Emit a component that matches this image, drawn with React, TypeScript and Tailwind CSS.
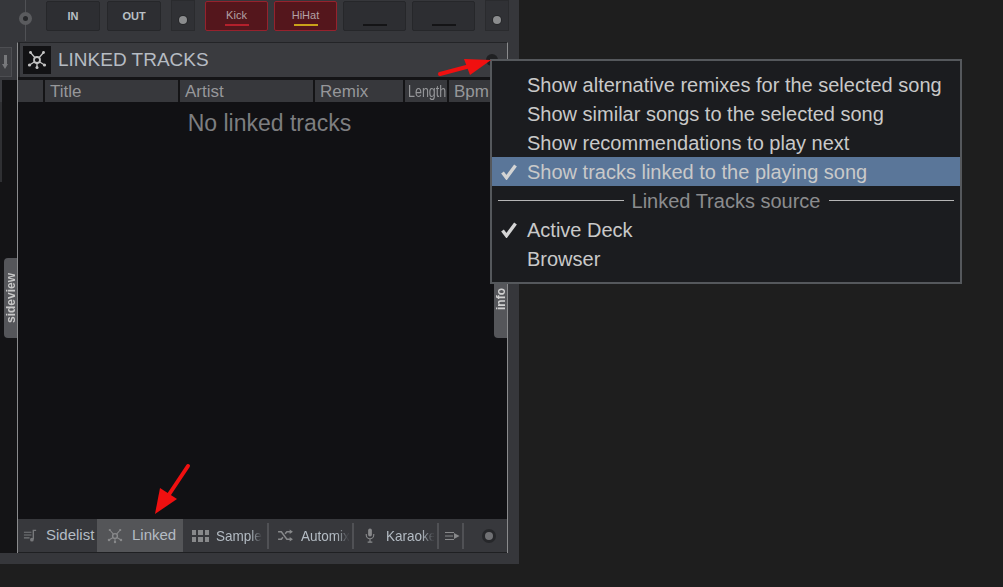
import React from 'react';

const LinkedIcon: React.FC<{ className?: string }> = ({ className }) => (
    <svg viewBox="0 0 20 20" className={className} fill="none" stroke="currentColor">
        <circle cx="10" cy="10" r="3" strokeWidth="1.8" />
        <path d="M3.5 2.5l4.5 5.2M16.5 2.5L12 7.7M7.6 11.8L2.5 15M12.4 11.8l5.1 3.2M10 13v4.5" strokeWidth="1.3" />
        <circle cx="3.5" cy="2.5" r="1.4" fill="currentColor" stroke="none" />
        <circle cx="16.5" cy="2.5" r="1.4" fill="currentColor" stroke="none" />
        <circle cx="2.5" cy="15" r="1.6" fill="currentColor" stroke="none" />
        <circle cx="17.5" cy="15" r="1.6" fill="currentColor" stroke="none" />
        <circle cx="10" cy="17.5" r="1.5" fill="currentColor" stroke="none" />
    </svg>
);

const CheckMark = () => (
    <svg viewBox="0 0 16 16" className="w-[16px] h-[16px] text-[#d4d4d4]" fill="none" stroke="currentColor">
        <path d="M1.5 8.5l4 5.2L14.5 1.5" strokeWidth="3.4" />
    </svg>
);

const KnobButton = () => (
    <div className="w-[24px] h-[31px] -mt-[1px] bg-[#303135] border border-[#2a2b2e] flex items-center justify-center pt-[8px]">
        <div className="w-[8px] h-[8px] rounded-full bg-[#8b8c8e] ring-1 ring-[#26272a]" />
    </div>
);

const PadButton: React.FC<{ label?: string; bar: string; red?: boolean }> = ({ label, bar, red }) => (
    <div className={`w-[63px] h-[30px] rounded-[2px] border flex flex-col items-center ${red ? 'bg-[#54161c] border-[#96222d]' : 'bg-[#2d2e32] border-[#26272a]'}`}>
        <span className="h-[22px] pt-[6px] text-[11px] leading-[14px] text-[#b3a1a5]">{label}</span>
        <div className={`w-[24px] h-[2px] ${bar}`} />
    </div>
);

const ColumnHeader: React.FC<{ label: string; width: string; small?: boolean }> = ({ label, width, small }) => (
    <div className={`${width} h-full shrink-0 overflow-hidden whitespace-nowrap bg-[#37383c] text-[#96979a] flex items-center pt-[1px] ${small ? 'pl-[3px] text-[16px]' : 'pl-[5px] text-[17px]'}`}>
        <span className={small ? 'inline-block origin-left scale-x-[0.78]' : ''}>{label}</span>
    </div>
);

const TabSep = () => <div className="w-[2px] h-[26px] bg-[#505155] shrink-0" />;

const FadedLabel: React.FC<{ label: string; width: string }> = ({ label, width }) => (
    <span className={`${width} inline-block align-middle origin-left scale-x-[0.9] overflow-hidden whitespace-nowrap text-[15px] text-[#b4bcc4] mask-r-from-75% mask-r-to-100%`}>{label}</span>
);

const menuItems = [
    { label: 'Show alternative remixes for the selected song' },
    { label: 'Show similar songs to the selected song' },
    { label: 'Show recommendations to play next' },
    { label: 'Show tracks linked to the playing song', checked: true, active: true },
];

const MenuRow: React.FC<{ label: string; checked?: boolean; active?: boolean }> = ({ label, checked, active }) => (
    <div className={`h-[29px] flex items-center text-[20px] text-[#c9c9c9] ${active ? 'bg-[#5a7699]' : ''}`}>
        <div className="w-[35px] pl-[9px] flex items-center">{checked && <CheckMark />}</div>
        <span className="whitespace-nowrap">{label}</span>
    </div>
);

export default function App() {
    return (
        <div className="relative w-[1003px] h-[587px] overflow-hidden bg-[#1e1e1e] font-['Liberation_Sans',Arial,sans-serif]">
            <div className="w-[519px] h-[564px] bg-[#36373b] flex flex-col">
                {/* Top strip */}
                <div className="h-[42px] pt-[1px] flex items-start shrink-0">
                    <div className="w-[46px] h-[41px] -mt-[1px] relative shrink-0">
                        <div className="absolute left-[25px] top-0 bottom-0 w-px bg-[#505155]" />
                        <div className="absolute left-[19px] top-[12px] w-[13px] h-[13px] rounded-full border-[4px] border-[#5a5b5e] bg-[#26272a]" />
                    </div>
                    <div className="w-[54px] h-[30px] rounded-[2px] bg-[#2d2e32] border border-[#26272a] flex items-center justify-center text-[11px] font-bold text-[#b9c0c6]">IN</div>
                    <div className="ml-[7px] w-[54px] h-[30px] rounded-[2px] bg-[#2d2e32] border border-[#26272a] flex items-center justify-center text-[11px] font-bold text-[#b9c0c6]">OUT</div>
                    <div className="ml-[10px]"><KnobButton /></div>
                    <div className="ml-[10px] flex gap-[6px]">
                        <PadButton label="Kick" bar="bg-[#b3202c]" red />
                        <PadButton label="HiHat" bar="bg-[#c9a21a]" red />
                        <PadButton bar="bg-[#141416]" />
                        <PadButton bar="bg-[#141416]" />
                    </div>
                    <div className="ml-[10px]"><KnobButton /></div>
                </div>

                {/* Main row */}
                <div className="h-[511px] flex shrink-0">
                    {/* Left gutter */}
                    <div className="w-[17px] shrink-0 flex flex-col">
                        <div className="h-[38px] pt-[5px] shrink-0">
                            <div className="w-[12px] h-[30px] bg-[#3e3f43] border border-[#4d4e52] border-l-0 flex items-center pl-[2px]">
                                <svg viewBox="0 0 6 14" className="w-[6px] h-[14px] text-[#77787b]">
                                    <path d="M2 0h3v9h1l-3 5-3-5h2z" fill="currentColor" />
                                </svg>
                            </div>
                        </div>
                        <div className="flex-1 bg-[#141416]">
                            <div className="w-[2px] h-[22px] bg-[#3a3b3f]" />
                            <div className="w-[2px] h-[80px] bg-[#2f3033]" />
                        </div>
                    </div>

                    {/* Linked tracks panel */}
                    <div className="w-[491px] flex flex-col border-x border-x-[#8a8b8d] border-t border-t-[#232427]">
                        <div className="h-[34px] shrink-0 bg-[#3a3b3f] border-l-2 border-l-[#232427] flex items-center pl-[3px]">
                            <div className="w-[28px] h-[28px] bg-[#121214] flex items-center justify-center text-[#c4c4c4]">
                                <LinkedIcon className="w-[20px] h-[20px]" />
                            </div>
                            <span className="ml-[7px] pt-[1px] text-[19px] text-[#b6bcc3]">LINKED TRACKS</span>
                        </div>
                        <div className="h-[25px] shrink-0 bg-[#141416] pt-[3px] flex gap-[2px]">
                            <div className="w-[25px] h-full bg-[#37383c] shrink-0" />
                            <ColumnHeader label="Title" width="w-[133px]" />
                            <ColumnHeader label="Artist" width="w-[133px]" />
                            <ColumnHeader label="Remix" width="w-[88px]" />
                            <ColumnHeader label="Length" width="w-[42px]" small />
                            <ColumnHeader label="Bpm" width="w-[56px]" />
                        </div>
                        <div className="h-[417px] shrink-0 bg-[#111114] pl-[14px] text-center text-[23px] leading-[42px] text-[#7d7e80]">No linked tracks</div>
                        <div className="flex-1 bg-[#37383c] border-b border-b-[#1f2022] flex items-center relative">
                            <div className="w-[79px] flex items-center shrink-0 pl-[5px] text-[#77787b]">
                                <svg viewBox="0 0 16 16" className="w-[15px] h-[15px]" fill="none" stroke="currentColor" strokeWidth="1.2">
                                    <path d="M1 4.5h8M1 7.5h8M1 10.5h6" />
                                    <path d="M11 12V2.5h3" strokeWidth="1.5" />
                                    <circle cx="9.5" cy="12.5" r="2" fill="currentColor" stroke="none" />
                                </svg>
                                <span className="ml-[8px] text-[15px] text-[#b4bcc4]">Sidelist</span>
                            </div>
                            <div className="w-[86px] h-full bg-[#545558] flex items-center shrink-0 pl-[10px] text-[#88898b]">
                                <LinkedIcon className="w-[16px] h-[16px]" />
                                <span className="ml-[9px] text-[15px] text-[#b4bcc4]">Linked</span>
                            </div>
                            <div className="w-[86px] flex items-center shrink-0 pl-[9px]">
                                <div className="grid grid-cols-3 gap-[2px] w-[17px] shrink-0">
                                    {Array.from({ length: 6 }).map((_, i) => (
                                        <div key={i} className="h-[5px] bg-[#88898b]" />
                                    ))}
                                </div>
                                <span className="ml-[7px] w-[45px] shrink-0"><FadedLabel label="Sample" width="w-[51px]" /></span>
                                <div className="ml-auto"><TabSep /></div>
                            </div>
                            <div className="w-[85px] flex items-center shrink-0 pl-[9px] text-[#88898b]">
                                <svg viewBox="0 0 16 14" className="w-[15px] h-[13px] shrink-0" fill="none" stroke="currentColor" strokeWidth="1.6">
                                    <path d="M0 3h3.5l6 8H13M0 11h3.5l1.7-2.2M7.6 5.2L9.5 3H13" />
                                    <path d="M12.5 0.5L16 3l-3.5 2.5zM12.5 8.5L16 11l-3.5 2.5z" fill="currentColor" stroke="none" />
                                </svg>
                                <span className="ml-[8px] w-[47px] shrink-0"><FadedLabel label="Automix" width="w-[53px]" /></span>
                                <div className="ml-auto"><TabSep /></div>
                            </div>
                            <div className="w-[85px] flex items-center shrink-0 pl-[11px] text-[#88898b]">
                                <svg viewBox="0 0 10 16" className="w-[10px] h-[15px] shrink-0" fill="none" stroke="currentColor" strokeWidth="1.2">
                                    <rect x="3" y="0.5" width="4" height="8.5" rx="2" fill="currentColor" stroke="none" />
                                    <path d="M1 6.5v1a4 4 0 0 0 8 0v-1M5 11.5v3M2.5 15h5" />
                                </svg>
                                <span className="ml-[11px] w-[47px] shrink-0"><FadedLabel label="Karaoke" width="w-[53px]" /></span>
                                <div className="ml-auto"><TabSep /></div>
                            </div>
                            <div className="w-[25px] flex items-center justify-between shrink-0 pl-[6px] text-[#88898b]">
                                <svg viewBox="0 0 15 10" className="w-[15px] h-[10px] shrink-0" fill="none" stroke="currentColor">
                                    <path d="M0 1.5h9M0 5h8M0 8.5h9" />
                                    <path d="M9 2l5.5 3L9 8z" fill="currentColor" stroke="none" />
                                </svg>
                                <TabSep />
                            </div>
                            <div className="ml-[21px] w-[8px] h-[8px] rounded-full bg-[#707174] ring-[3px] ring-[#26272a]" />
                        </div>
                    </div>
                </div>
            </div>

            {/* Side tabs */}
            <div className="absolute left-[4px] top-[258px] w-[13px] h-[80px] rounded-l-[4px] bg-[#55565a] flex items-center justify-center">
                <span className="[writing-mode:vertical-rl] rotate-180 text-[12px] font-bold text-[#c8c8c8]">sideview</span>
            </div>
            <div className="absolute left-[494px] top-[284px] w-[13px] h-[54px] rounded-bl-[4px] bg-[#55565a] flex justify-center pt-[3px]">
                <span className="[writing-mode:vertical-rl] rotate-180 h-[24px] text-center text-[12px] font-bold text-[#d0d0d0]">info</span>
            </div>

            {/* Header knob under the menu corner */}
            <div className="absolute left-[486px] top-[54px] w-[12px] h-[12px] rounded-full bg-[#1f2022]" />

            {/* Context menu */}
            <div className="absolute left-[490px] top-[59px] w-[472px] h-[225px] border-2 border-[#55585c] bg-[#1b1c1f] pt-[9px]">
                {menuItems.map((item) => (
                    <MenuRow key={item.label} {...item} />
                ))}
                <div className="h-[29px] flex items-center px-[6px] gap-[8px] text-[20px] text-[#8b8c8e]">
                    <div className="flex-1 h-px bg-[#b5b5b5]" />
                    <span className="whitespace-nowrap">Linked Tracks source</span>
                    <div className="flex-1 h-px bg-[#b5b5b5]" />
                </div>
                <MenuRow label="Active Deck" checked />
                <MenuRow label="Browser" />
            </div>

            {/* Red annotation arrows */}
            <svg className="absolute left-0 top-0 w-[1003px] h-[587px] pointer-events-none" viewBox="0 0 1003 587" fill="none">
                <path d="M440 74L472 65.5" stroke="#f01010" strokeWidth="4" strokeLinecap="round" />
                <path d="M491 60L464 59L470 75Z" fill="#f01010" />
                <path d="M188 466L168 496" stroke="#f01010" strokeWidth="4" strokeLinecap="round" />
                <path d="M155 514L160 488L177 499Z" fill="#f01010" />
            </svg>
        </div>
    );
}
